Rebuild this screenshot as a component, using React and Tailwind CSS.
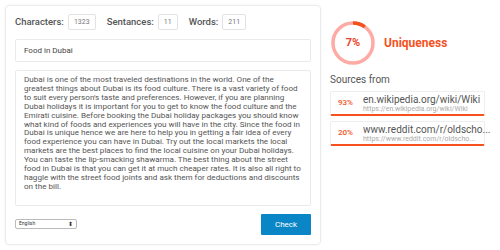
const text =
  "Dubai is one of the most traveled destinations in the world. One of the greatest things about Dubai is its food culture. There is a vast variety of food to suit every person's taste and preferences. However, if you are planning Dubai holidays it is important for you to get to know the food culture and the Emirati cuisine. Before booking the Dubai holiday packages you should know what kind of foods and experiences you will have in the city. Since the food in Dubai is unique hence we are here to help you in getting a fair idea of every food experience you can have in Dubai. Try out the local markets the local markets are the best places to find the local cuisine on your Dubai holidays. You can taste the lip-smacking shawarma. The best thing about the street food in Dubai is that you can get it at much cheaper rates. It is also all right to haggle with the street food joints and ask them for deductions and discounts on the bill.";

const sources = [
  { pct: "93%", title: "en.wikipedia.org/wiki/Wiki", url: "https://en.wikipedia.org/wiki/Wiki" },
  { pct: "20%", title: "www.reddit.com/r/oldscho...", url: "https://www.reddit.com/r/oldscho..." },
];

const Stat = ({ label, value }) => (
  <div className="flex items-center gap-[4px]">
    <span className="text-[9.5px] font-medium text-[#555]">{label}</span>
    <span className="h-[16px] px-[5px] flex items-center border border-[#e3e3e3] rounded-[2px] text-[7px] text-[#777]">
      {value}
    </span>
  </div>
);

const Ring = () => {
  const r = 20;
  const c = 2 * Math.PI * r;
  return (
    <div className="relative w-[46px] h-[46px]">
      <svg width="46" height="46" viewBox="0 0 46 46">
        <circle cx="23" cy="23" r={r} fill="none" stroke="#ffaba5" strokeWidth="3.5" />
        <circle
          cx="23"
          cy="23"
          r={r}
          fill="none"
          stroke="#f4511e"
          strokeWidth="3.5"
          strokeDasharray={`${c * 0.1} ${c}`}
          transform="rotate(-90 23 23)"
        />
      </svg>
      <span className="absolute inset-0 flex items-center justify-center text-[11px] font-bold text-[#e8452a]">7%</span>
    </div>
  );
};

export default function App() {
  return (
    <div className="w-[500px] h-[250px] bg-white flex font-['Roboto',sans-serif]">
      <div className="ml-[5px] mt-[5px] w-[316px] h-[240px] border border-[#ececec] rounded-[4px] shadow-[0_0_3px_rgba(0,0,0,0.06)] px-[9px] pt-[6px]">
        <div className="flex items-center gap-[11px] h-[20px]">
          <Stat label="Characters:" value="1323" />
          <Stat label="Sentances:" value="11" />
          <Stat label="Words:" value="211" />
        </div>
        <div className="mt-[7px] h-[23px] border border-[#eaeaea] rounded-[2px] flex items-center px-[8px] text-[8px] text-[#444]">
          Food in Dubai
        </div>
        <div className="mt-[8px] h-[136px] border border-[#eaeaea] rounded-[2px] px-[8px] pt-[4px] text-[8.1px] leading-[8.9px] text-[#555]">
          {text}
        </div>
        <div className="mt-[8px] flex items-start justify-between">
          <div className="mt-[5px] w-[62px] h-[10px] border border-[#bbb] rounded-[2px] flex items-center justify-between px-[3px] text-[5px] text-[#333]">
            <span>English</span>
            <span className="text-[6px] leading-none">⬍</span>
          </div>
          <button className="w-[50px] h-[21px] bg-[#0a86c6] text-white text-[8px] rounded-[1px]">Check</button>
        </div>
      </div>
      <div className="ml-[9px] pt-[20px] w-[155px]">
        <div className="flex items-center gap-[8px]">
          <Ring />
          <span className="text-[12px] font-bold text-[#f4511e]">Uniqueness</span>
        </div>
        <div className="mt-[6px] text-[10px] text-[#555]">Sources from</div>
        <div className="mt-[4px] flex flex-col gap-[5px]">
          {sources.map((s) => (
            <div
              key={s.pct}
              className="h-[25px] flex items-center border border-[#eee] border-b-2 border-b-[#f4511e] rounded-[2px]"
            >
              <span className="w-[32px] pl-[7px] text-[8px] font-medium text-[#f4511e]">{s.pct}</span>
              <div className="flex-1 min-w-0 pr-[4px]">
                <div className="text-[10px] leading-[11px] text-[#555] whitespace-nowrap">{s.title}</div>
                <div className="text-[7px] leading-[8px] text-[#aaa] whitespace-nowrap">{s.url}</div>
              </div>
            </div>
          ))}
        </div>
      </div>
    </div>
  );
}
